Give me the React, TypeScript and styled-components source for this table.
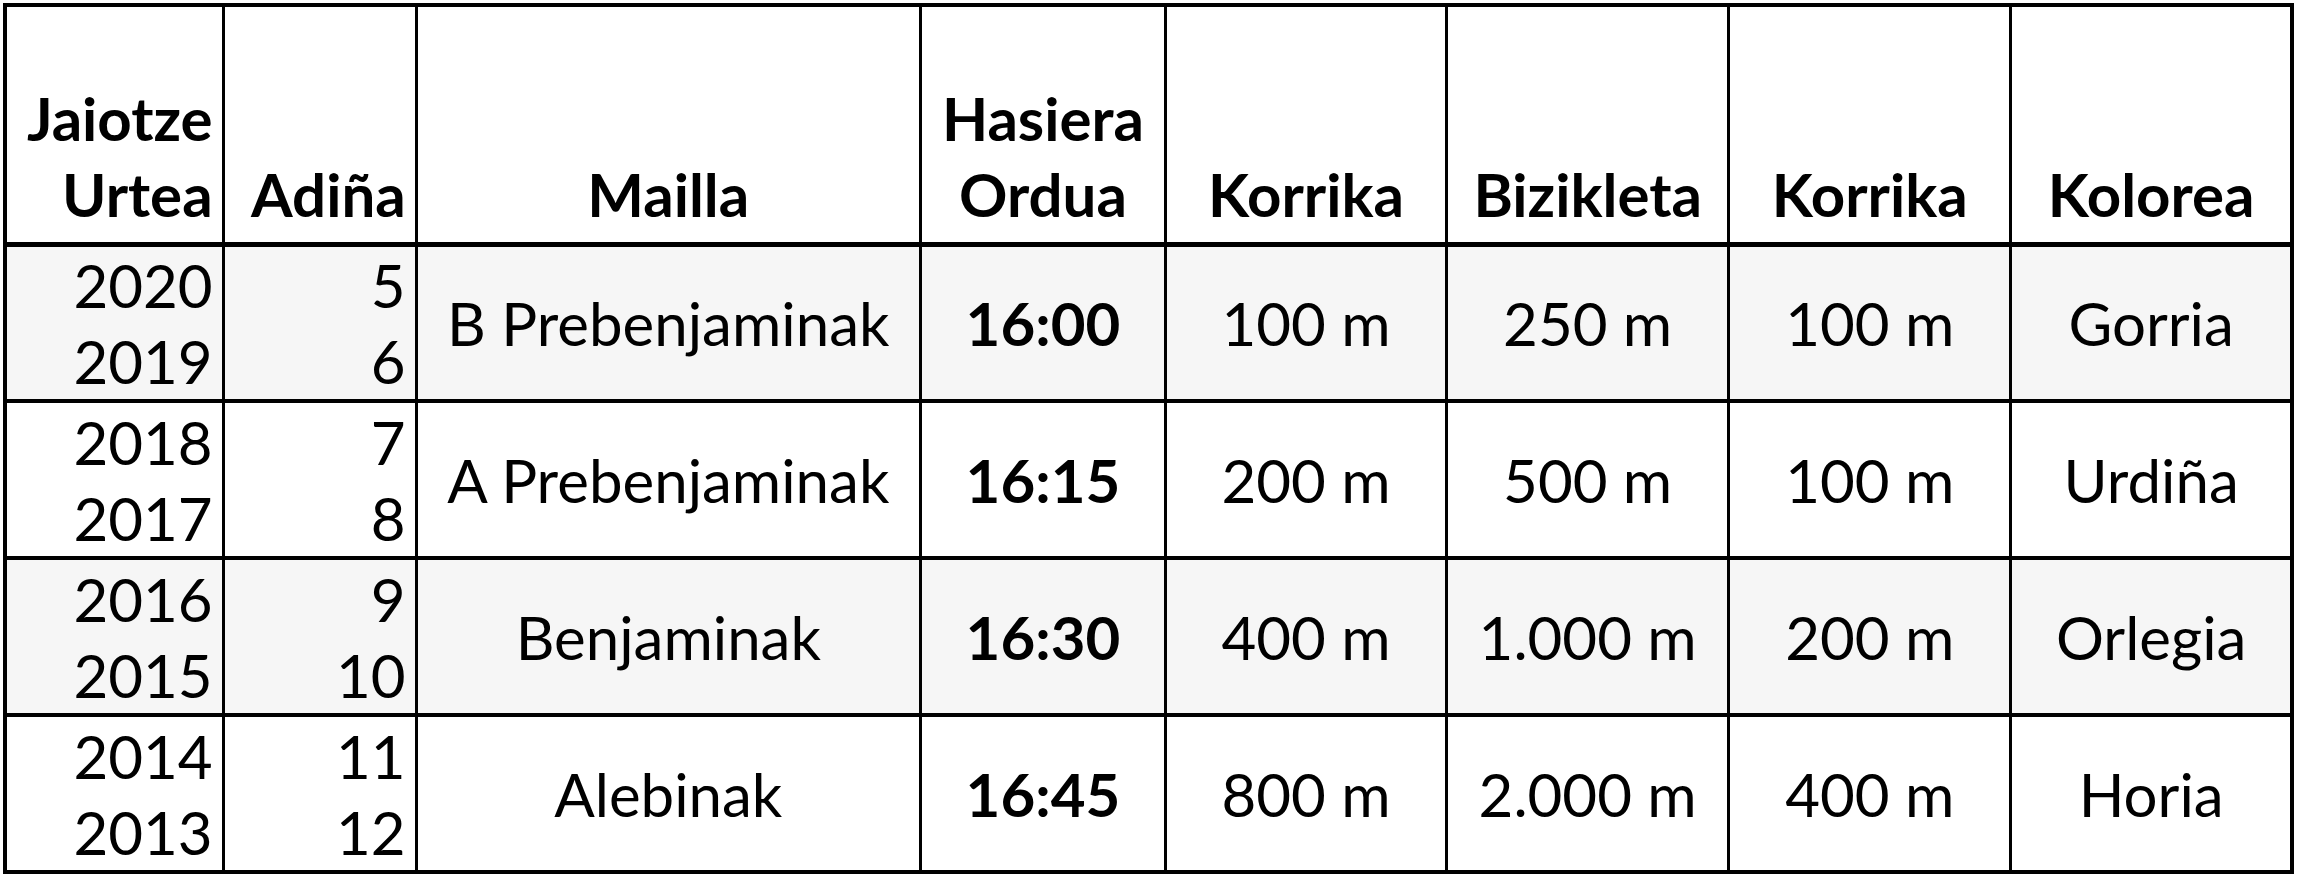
import React from 'react'
import styled, { createGlobalStyle } from 'styled-components'

const GlobalStyle = createGlobalStyle`
  html, body {
    margin: 0;
    padding: 0;
    background: #ffffff;
  }
  body {
    font-family: Lato, 'Liberation Sans', sans-serif;
    color: #000000;
  }
`

type Align = 'left' | 'center' | 'right'

const Page = styled.div`
  padding: 3px 0 0 3px;
`

const Sheet = styled.table`
  border-collapse: collapse;
  table-layout: fixed;
  width: 2291px;
  border: 4px solid #000;
  font-size: 60px;
  line-height: 76px;
`

const HeadRow = styled.tr`
  height: 239px;
  background: #ffffff;
`

const BodyRow = styled.tr<{ $shaded: boolean }>`
  height: 157px;
  background: ${(p) => (p.$shaded ? '#f6f6f6' : '#ffffff')};
`

const HeadCell = styled.th<{ $align?: Align }>`
  vertical-align: bottom;
  text-align: ${(p) => p.$align ?? 'center'};
  font-weight: 700;
  border: 3px solid #000;
  border-bottom-width: 5px;
  padding: 0 9px 10px;
`

const Cell = styled.td<{ $align?: Align; $bold?: boolean }>`
  vertical-align: middle;
  text-align: ${(p) => p.$align ?? 'center'};
  font-weight: ${(p) => (p.$bold ? 700 : 400)};
  border: 3px solid #000;
  border-top-width: 4px;
  padding: 0 9px;
  white-space: nowrap;
`

const Line = styled.div`
  display: block;
`

type Group = {
  years: [string, string]
  ages: [string, string]
  level: string
  start: string
  run1: string
  bike: string
  run2: string
  colour: string
}

const groups: Group[] = [
  { years: ['2020', '2019'], ages: ['5', '6'], level: 'B Prebenjaminak', start: '16:00', run1: '100 m', bike: '250 m', run2: '100 m', colour: 'Gorria' },
  { years: ['2018', '2017'], ages: ['7', '8'], level: 'A Prebenjaminak', start: '16:15', run1: '200 m', bike: '500 m', run2: '100 m', colour: 'Urdiña' },
  { years: ['2016', '2015'], ages: ['9', '10'], level: 'Benjaminak', start: '16:30', run1: '400 m', bike: '1.000 m', run2: '200 m', colour: 'Orlegia' },
  { years: ['2014', '2013'], ages: ['11', '12'], level: 'Alebinak', start: '16:45', run1: '800 m', bike: '2.000 m', run2: '400 m', colour: 'Horia' },
]

const widths = [218, 193, 504, 245, 281, 282, 282, 281]

export default function App(): React.ReactElement {
  return (
    <Page>
      <GlobalStyle />
      <Sheet>
        <colgroup>
          {widths.map((w, i) => (
            <col key={i} style={{ width: w }} />
          ))}
        </colgroup>
        <thead>
          <HeadRow>
            <HeadCell $align="right">
              <Line>Jaiotze</Line>
              <Line>Urtea</Line>
            </HeadCell>
            <HeadCell $align="right">Adiña</HeadCell>
            <HeadCell>Mailla</HeadCell>
            <HeadCell>
              <Line>Hasiera</Line>
              <Line>Ordua</Line>
            </HeadCell>
            <HeadCell>Korrika</HeadCell>
            <HeadCell>Bizikleta</HeadCell>
            <HeadCell>Korrika</HeadCell>
            <HeadCell>Kolorea</HeadCell>
          </HeadRow>
        </thead>
        <tbody>
          {groups.map((g, i) => (
            <BodyRow key={g.level} $shaded={i % 2 === 0}>
              <Cell $align="right">
                <Line>{g.years[0]}</Line>
                <Line>{g.years[1]}</Line>
              </Cell>
              <Cell $align="right">
                <Line>{g.ages[0]}</Line>
                <Line>{g.ages[1]}</Line>
              </Cell>
              <Cell>{g.level}</Cell>
              <Cell $bold>{g.start}</Cell>
              <Cell>{g.run1}</Cell>
              <Cell>{g.bike}</Cell>
              <Cell>{g.run2}</Cell>
              <Cell>{g.colour}</Cell>
            </BodyRow>
          ))}
        </tbody>
      </Sheet>
    </Page>
  )
}
